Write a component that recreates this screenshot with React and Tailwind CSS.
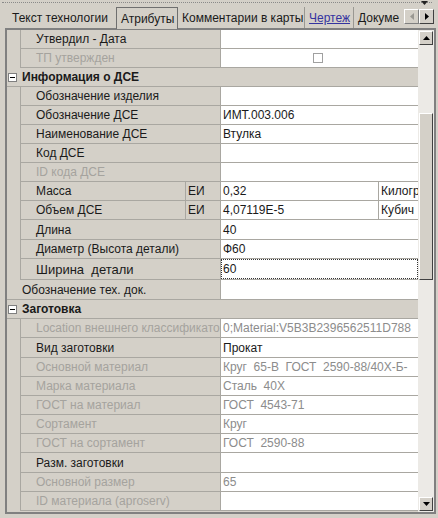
import React from 'react'

const FONT = { fontFamily: '"Liberation Sans", Arial, sans-serif' }

function Sub({ h = 'h-[19px]', label, value, grey, valueGrey, big, focus, children }) {
  return (
    <div className={`flex ${h}`}>
      <div className="w-[13px] shrink-0" />
      <div className={`w-[200px] shrink-0 border-l border-b border-[#a9a7a1] pl-[15px] flex items-center whitespace-pre overflow-hidden ${grey ? 'text-[#a5a39e]' : 'text-[#1a1a1a]'} ${big ? 'text-[13px]' : ''}`}>
        {label}
      </div>
      <div className={`flex-1 border-l border-b border-[#a9a7a1] bg-white flex items-center whitespace-pre overflow-hidden ${valueGrey ? 'text-[#8c8c8c]' : 'text-[#1a1a1a]'}`}>
        {focus ? (
          <div className="h-full w-full border border-dotted border-[#333] pl-[1px] flex items-center">{value}</div>
        ) : (
          <div className="pl-[2px] w-full flex items-center">{children || value}</div>
        )}
      </div>
    </div>
  )
}

function Unit({ label, value, unit }) {
  return (
    <div className="flex h-[19px]">
      <div className="w-[13px] shrink-0" />
      <div className="w-[165px] shrink-0 border-l border-b border-[#a9a7a1] pl-[15px] flex items-center text-[#1a1a1a]">{label}</div>
      <div className="w-[35px] shrink-0 border-l border-b border-[#a9a7a1] pl-[2px] flex items-center text-[#1a1a1a]">ЕИ</div>
      <div className="w-[158px] shrink-0 border-l border-b border-[#a9a7a1] bg-white pl-[2px] flex items-center text-[#1a1a1a]">{value}</div>
      <div className="flex-1 border-l border-b border-[#a9a7a1] bg-white pl-[2px] flex items-center text-[#1a1a1a] overflow-hidden whitespace-nowrap">{unit}</div>
    </div>
  )
}

function Cat({ label }) {
  return (
    <div className="flex h-[19px] border-b border-[#a9a7a1] items-center">
      <div className="ml-[1px] w-[9px] h-[9px] border border-[#7f7f7f] bg-white flex items-center justify-center">
        <div className="w-[5px] h-[1px] bg-black" />
      </div>
      <span className="ml-[5px] font-bold text-[#1a1a1a]">{label}</span>
    </div>
  )
}

function Top({ h = 'h-[19px]', label }) {
  return (
    <div className={`flex ${h}`}>
      <div className="w-[213px] shrink-0 border-b border-[#a9a7a1] pl-[15px] flex items-center text-[#1a1a1a]">{label}</div>
      <div className="flex-1 border-l border-b border-[#a9a7a1] bg-white" />
    </div>
  )
}

function ArrowBtn({ dir }) {
  return (
    <div className="w-[14px] h-[14px] bg-[#d4d0c8] border border-t-white border-l-white border-r-[#404040] border-b-[#404040] flex items-center justify-center">
      {dir === 'up' ? (
        <svg width="7" height="4" viewBox="0 0 7 4"><path d="M3.5 0 L7 4 L0 4 Z" fill="#000" /></svg>
      ) : (
        <svg width="7" height="4" viewBox="0 0 7 4"><path d="M0 0 L7 0 L3.5 4 Z" fill="#000" /></svg>
      )}
    </div>
  )
}

export default function App() {
  return (
    <div className="w-[438px] h-[518px] bg-[#d4d0c8] overflow-hidden text-[12px] leading-none select-none" style={FONT}>
      {/* Top dotted strip */}
      <div className="h-[7px] relative">
        <div className="absolute left-[2px] right-[6px] top-[2px] border-t border-dotted border-[#8a8a8a]" />
        <svg className="absolute right-[10px] top-[1px]" width="7" height="4" viewBox="0 0 7 4"><path d="M0 0 L7 0 L3.5 4 Z" fill="#222" /></svg>
      </div>

      {/* Tabs */}
      <div className="h-[21px] flex items-end pl-[4px] relative">
        <div className="h-[21px] w-[112px] flex items-center pl-[8px] text-[#1a1a1a] whitespace-nowrap">Текст технологии</div>
        <div className="h-[22px] w-[62px] border-l border-t border-r border-[#6f6f6f] bg-[#d4d0c8] flex items-center pl-[4px] text-[#1a1a1a] -mb-[1px] z-10 whitespace-nowrap">Атрибуты</div>
        <div className="h-[21px] w-[127px] flex items-center pl-[4px] text-[#1a1a1a] whitespace-nowrap border-r border-[#9a9892]">Комментарии в карты</div>
        <div className="h-[21px] w-[49px] flex items-center pl-[4px] text-[#3434a0] underline whitespace-nowrap border-r border-[#9a9892]">Чертеж</div>
        <div className="h-[21px] w-[48px] flex items-center pl-[4px] text-[#1a1a1a] whitespace-nowrap overflow-hidden">Докуме</div>
        <div className="absolute right-[4px] top-[2px] flex">
          <div className="w-[15px] h-[15px] border border-t-white border-l-white border-r-[#808080] border-b-[#808080] flex items-center justify-center">
            <svg width="4" height="7" viewBox="0 0 4 7"><path d="M4 0 L4 7 L0 3.5 Z" fill="#9a9892" /></svg>
          </div>
          <div className="w-[15px] h-[15px] border border-t-white border-l-white border-r-[#404040] border-b-[#404040] flex items-center justify-center">
            <svg width="4" height="7" viewBox="0 0 4 7"><path d="M0 0 L4 3.5 L0 7 Z" fill="#000" /></svg>
          </div>
        </div>
      </div>

      {/* Grid */}
      <div className="ml-[5px] w-[431px] h-[486px] border-2 border-[#808080] flex">
        <div className="w-[411px] h-full overflow-hidden">
          <Sub label="Утвердил - Дата" value="" />
          <Sub label="ТП утвержден" grey>
            <div className="w-full flex justify-center pr-[6px]">
              <div className="w-[10px] h-[10px] border border-[#a0a0a0] bg-white" />
            </div>
          </Sub>
          <Cat label="Информация о ДСЕ" />
          <Sub label="Обозначение изделия" value="" />
          <Sub label="Обозначение ДСЕ" value="ИМТ.003.006" />
          <Sub label="Наименование ДСЕ" value="Втулка" />
          <Sub label="Код ДСЕ" value="" />
          <Sub label="ID кода ДСЕ" grey value="" />
          <Unit label="Масса" value="0,32" unit="Килограмм" />
          <Unit label="Объем ДСЕ" value="4,07119E-5" unit="Кубич" />
          <Sub h="h-[20px]" label="Длина" value="40" />
          <Sub label="Диаметр (Высота детали)" value="Ф60" />
          <Sub h="h-[21px]" big label="Ширина  детали" value="60" focus />
          <Top h="h-[20px]" label="Обозначение тех. док." />
          <Cat label="Заготовка" />
          <Sub label="Location внешнего классификатора" grey value="0;Material:V5B3B2396562511D788" valueGrey />
          <Sub h="h-[20px]" label="Вид заготовки" value="Прокат" />
          <Sub label="Основной материал" grey value="Круг  65-В  ГОСТ  2590-88/40Х-Б-" valueGrey />
          <Sub label="Марка материала" grey value="Сталь  40Х" valueGrey />
          <Sub label="ГОСТ на материал" grey value="ГОСТ  4543-71" valueGrey />
          <Sub label="Сортамент" grey value="Круг" valueGrey />
          <Sub label="ГОСТ на сортамент" grey value="ГОСТ  2590-88" valueGrey />
          <Sub h="h-[20px]" label="Разм. заготовки" value="" />
          <Sub label="Основной размер" grey value="65" valueGrey />
          <Sub label="ID материала (aproserv)" grey value="" />
        </div>
        {/* Scrollbar */}
        <div className="w-[16px] h-full bg-[#eceae6] flex flex-col items-center pt-[1px] pb-[1px]">
          <ArrowBtn dir="up" />
          <div className="h-[68px]" />
          <div className="w-[14px] h-[167px] bg-[#d4d0c8] border border-t-white border-l-white border-r-[#404040] border-b-[#404040]" />
          <div className="flex-1" />
          <ArrowBtn dir="down" />
        </div>
      </div>
    </div>
  )
}
